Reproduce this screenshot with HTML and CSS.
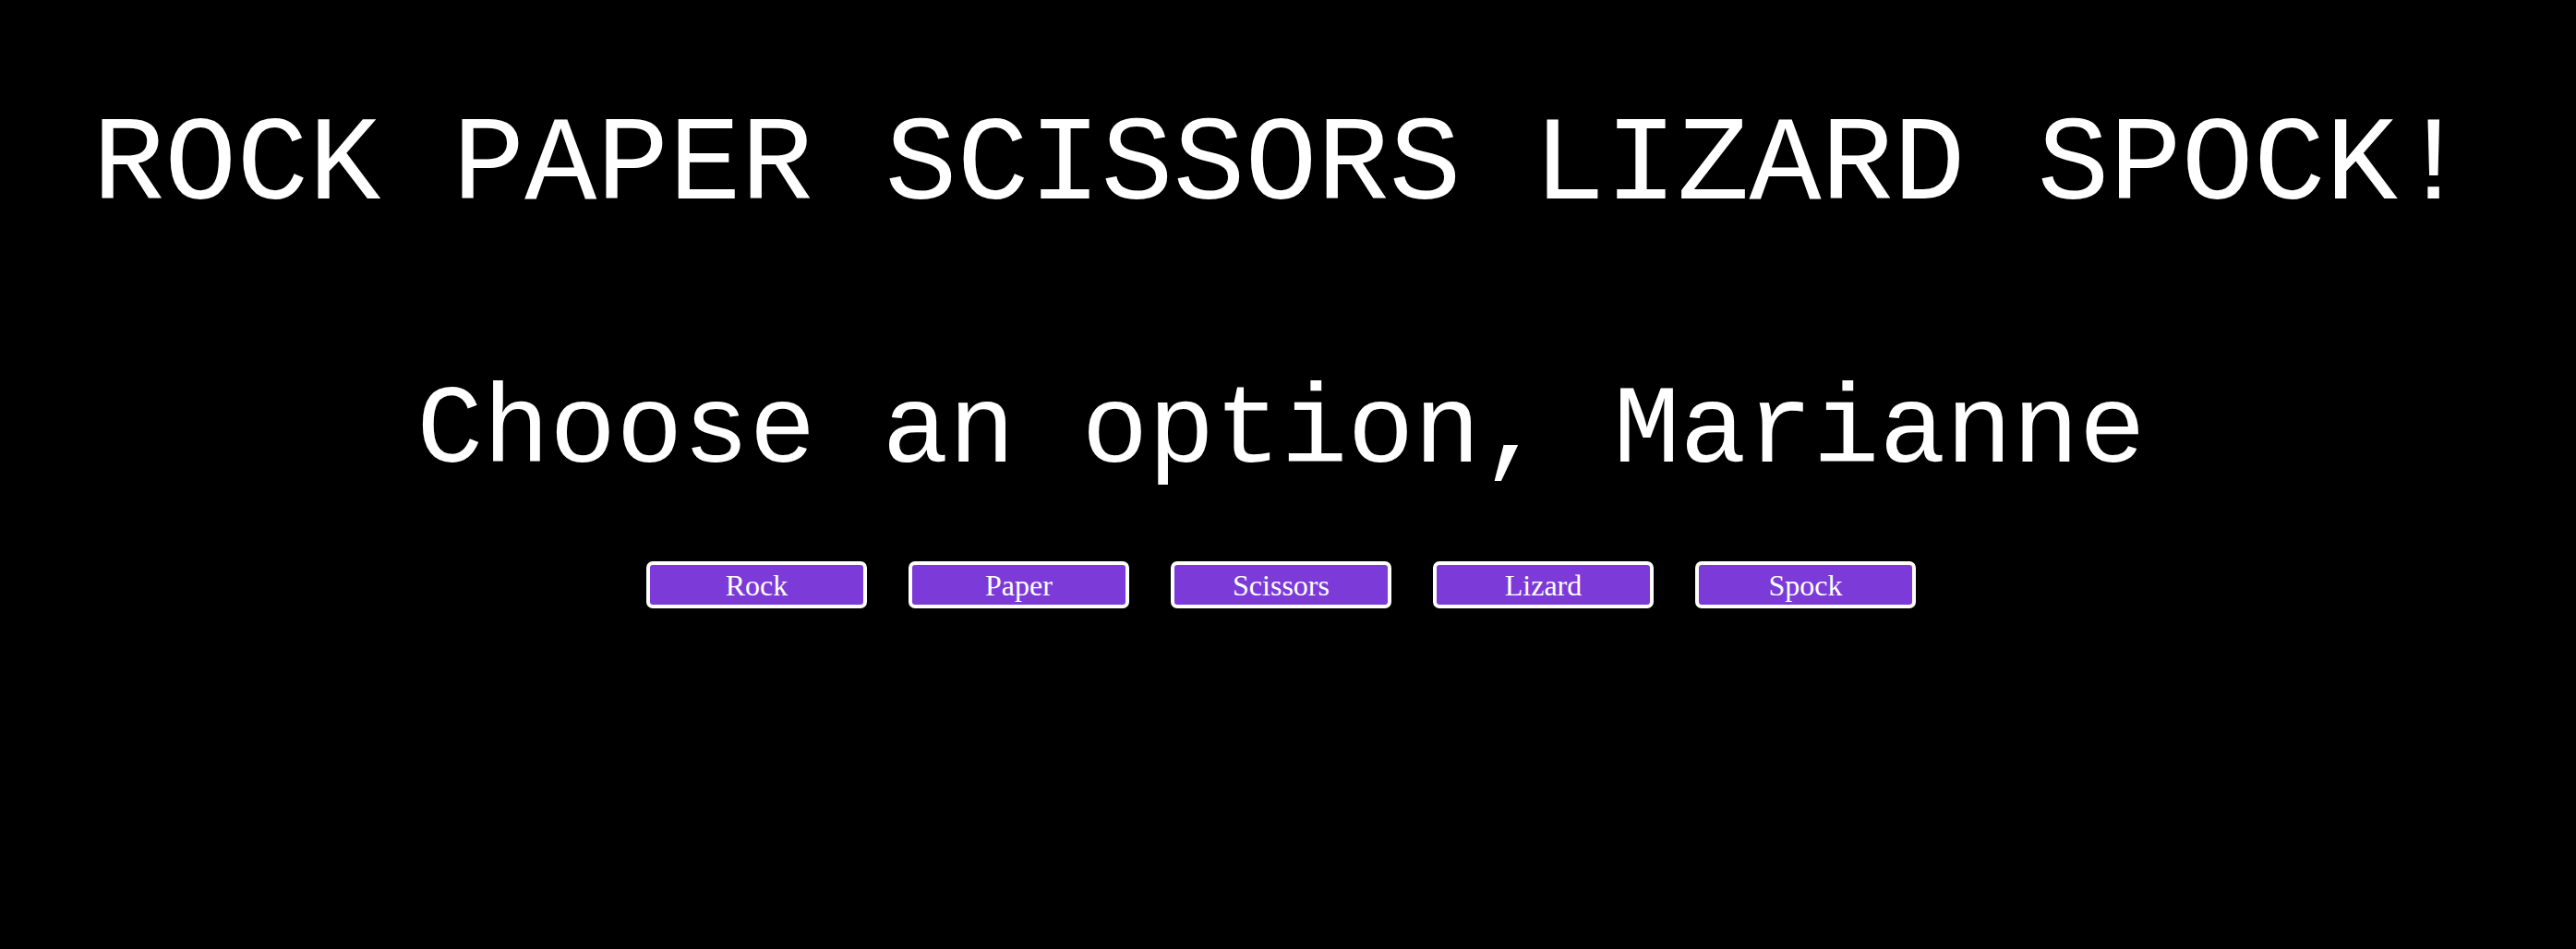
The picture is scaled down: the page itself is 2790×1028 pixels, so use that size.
FILE: index.html
```
<!DOCTYPE html>
<html lang="en">
<head>
<meta charset="utf-8">
<title>Rock Paper Scissors Lizard Spock</title>
<link rel="stylesheet" href="styles.css">
</head>
<body>
<main class="page">
  <h1 class="title">ROCK PAPER SCISSORS LIZARD SPOCK!</h1>
  <h2 class="prompt">Choose an option, Marianne</h2>
  <div class="options">
    <button class="option">Rock</button>
    <button class="option">Paper</button>
    <button class="option">Scissors</button>
    <button class="option">Lizard</button>
    <button class="option">Spock</button>
  </div>
</main>
</body>
</html>
```
FILE: styles.css
```
html, body {
  margin: 0;
  padding: 0;
  background: #000;
  color: #fff;
}

.page {
  padding: 107px 15px 0 0;
  display: flex;
  flex-direction: column;
  align-items: center;
}

.title {
  margin: 0;
  font-family: "Courier New", "Liberation Mono", monospace;
  font-weight: normal;
  font-size: 130px;
  line-height: normal;
  white-space: nowrap;
  text-align: center;
}

.prompt {
  margin: 146px 0 0;
  font-family: "Courier New", "Liberation Mono", monospace;
  font-weight: normal;
  font-size: 120px;
  line-height: normal;
  white-space: nowrap;
  text-align: center;
}

.options {
  margin-top: 72px;
  display: flex;
  gap: 45.5px;
}

.option {
  box-sizing: border-box;
  width: 238.5px;
  height: 51px;
  padding: 0;
  border: 4px solid #fff;
  border-radius: 7px;
  background: #7c3bd8;
  color: #fff;
  font-family: "Liberation Serif", "Times New Roman", serif;
  font-size: 32px;
  line-height: 1;
  cursor: pointer;
}
```
